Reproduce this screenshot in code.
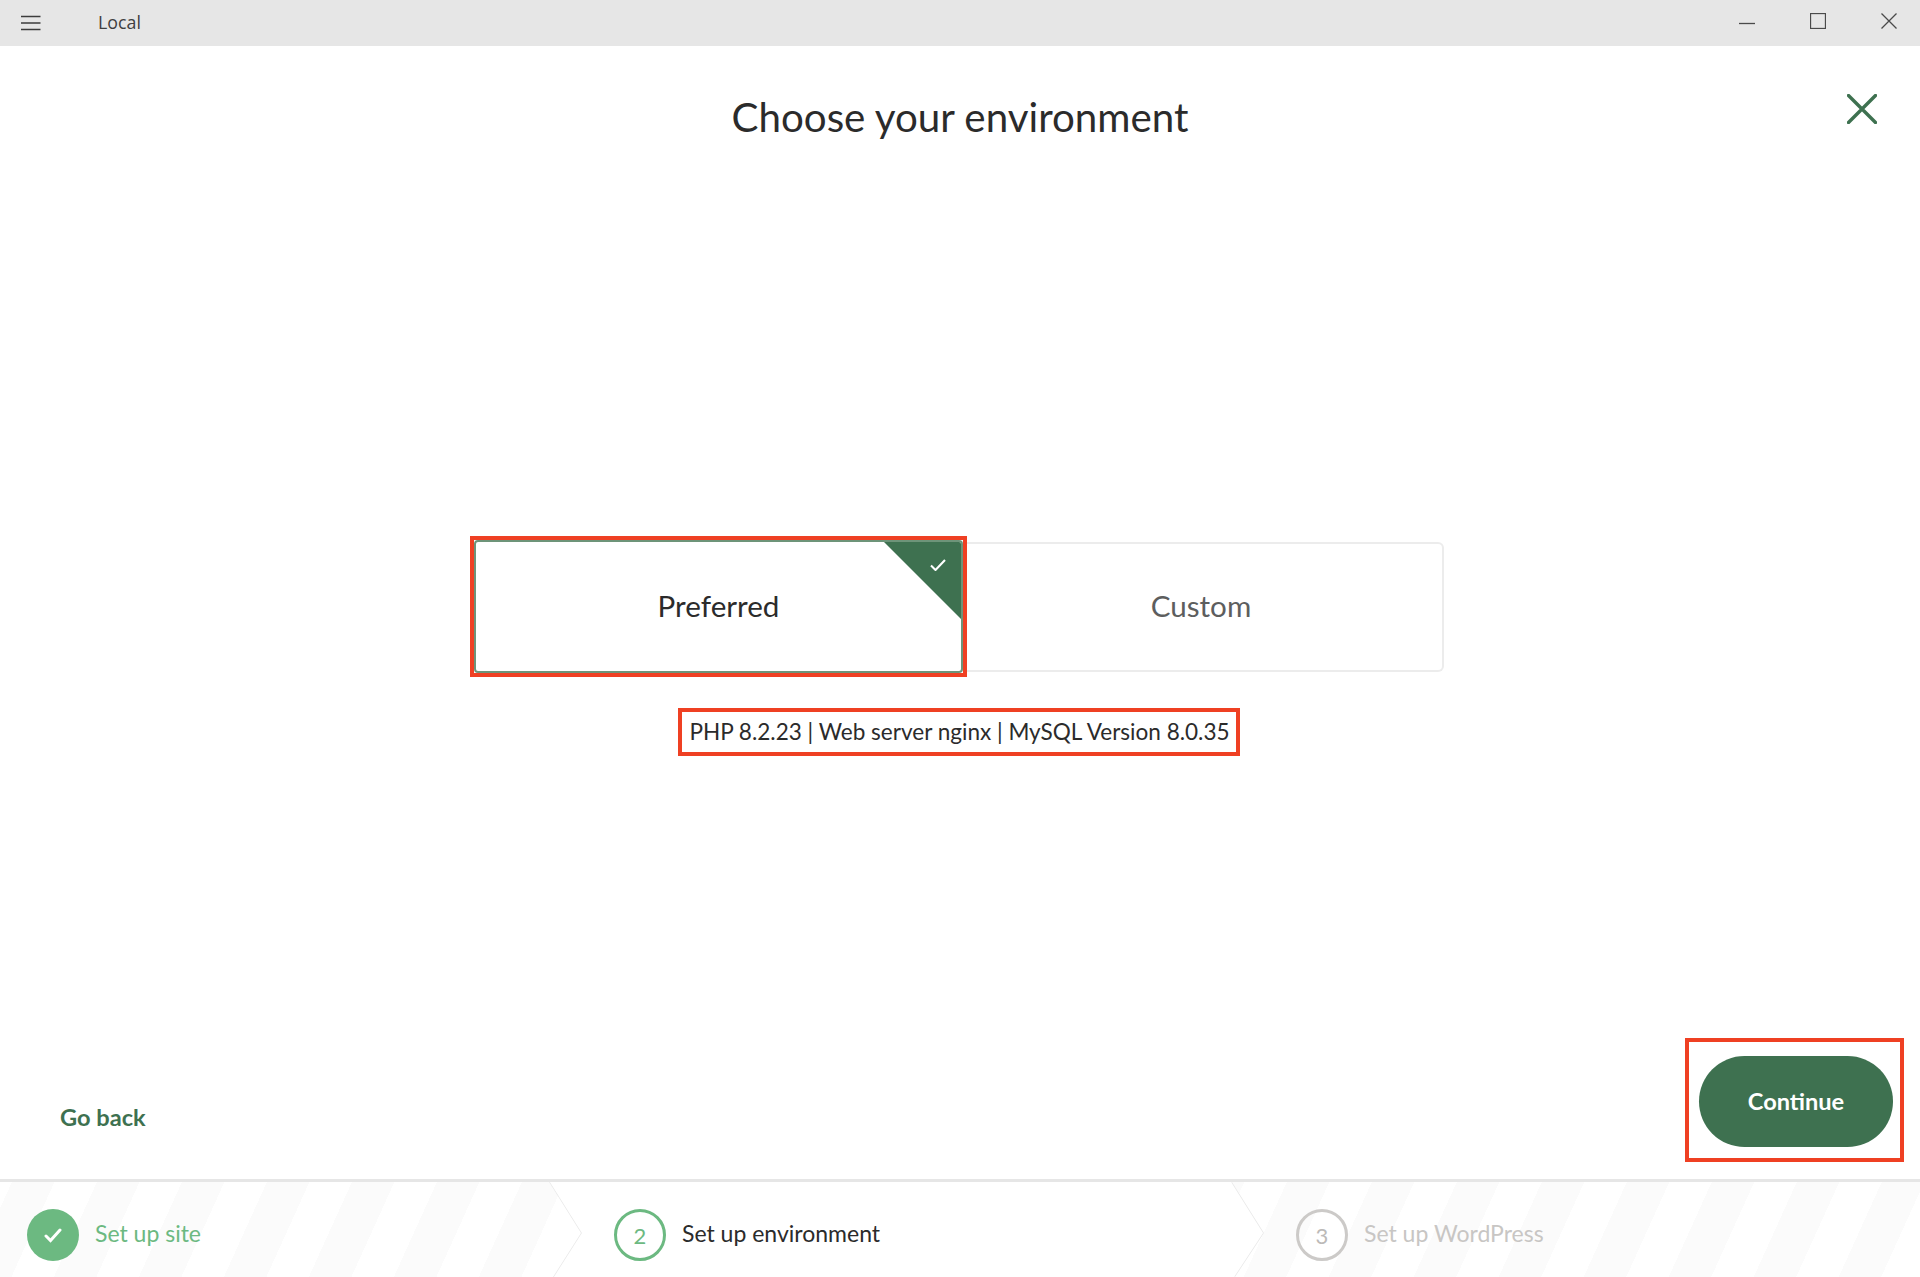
<script>
	// Local's new-site wizard, step 2: environment choice
</script>

<div class="window">
	<header class="titlebar">
		<svg class="menu" width="20" height="16" viewBox="0 0 20 16" aria-hidden="true">
			<path d="M0 1.5h19.5M0 8h19.5M0 14.5h19.5" />
		</svg>
		<span class="app-name">Local</span>
		<div class="controls">
			<svg width="16" height="16" viewBox="0 0 16 16" aria-hidden="true"><path d="M0 10.5h16" /></svg>
			<svg width="16" height="16" viewBox="0 0 16 16" aria-hidden="true"><rect x="0.5" y="0.5" width="15" height="15" /></svg>
			<svg width="16" height="16" viewBox="0 0 16 16" aria-hidden="true"><path d="M0.5 0.5l15 15M15.5 0.5l-15 15" /></svg>
		</div>
	</header>

	<main class="content">
		<svg class="dismiss" width="30" height="30" viewBox="0 0 30 30" aria-hidden="true">
			<path d="M1.5 1.5l27 27M28.5 1.5l-27 27" />
		</svg>
		<h1>Choose your environment</h1>

		<div class="options">
			<div class="marked">
				<button class="option selected">
					<span class="corner"></span>
					<svg class="tick" width="16" height="12" viewBox="0 0 16 12" aria-hidden="true">
						<path d="M1 6.5l4.5 4.5L15 1" />
					</svg>
					Preferred
				</button>
			</div>
			<button class="option other">Custom</button>
		</div>

		<p class="details">PHP 8.2.23 | Web server nginx | MySQL Version 8.0.35</p>

		<div class="actions">
			<button class="back">Go back</button>
			<div class="marked-action">
				<button class="continue">Continue</button>
			</div>
		</div>
	</main>

	<footer class="steps">
		<div class="step first">
			<span class="badge done">
				<svg width="18" height="15" viewBox="0 0 18 15" aria-hidden="true"><path d="M2 8l4.5 4.5L16 2" /></svg>
			</span>
			<span class="label done-label">Set up site</span>
		</div>
		<div class="step current">
			<svg class="chevrons" width="715" height="95" viewBox="0 0 715 95" aria-hidden="true">
				<path d="M0 0L32 51L4 95M683 0L715 51L686 95" />
			</svg>
			<span class="badge active">2</span>
			<span class="label active-label">Set up environment</span>
		</div>
		<div class="step last">
			<span class="badge todo">3</span>
			<span class="label todo-label">Set up WordPress</span>
		</div>
	</footer>
</div>

<style>
	:global(body) {
		margin: 0;
		background: #fff;
	}

	.window {
		display: flex;
		flex-direction: column;
		height: 1277px;
		font-family: Lato, "Open Sans", sans-serif;
		color: #2b2b2b;
		overflow: hidden;
	}

	button {
		font-family: inherit;
		cursor: pointer;
	}

	.titlebar {
		display: flex;
		align-items: center;
		flex: none;
		height: 46px;
		padding: 0 23px 0 21px;
		background: #e6e6e6;
	}
	.menu path {
		fill: none;
		stroke: #3c3c3c;
		stroke-width: 1.6;
	}
	.app-name {
		margin: -2px 0 0 57px;
		font-family: "Open Sans", sans-serif;
		font-size: 17.8px;
		color: #404040;
	}
	.controls {
		display: flex;
		gap: 55px;
		margin-left: auto;
	}
	.controls svg {
		display: block;
		margin-top: -5px;
	}
	.controls path,
	.controls rect {
		fill: none;
		stroke: #4a4a4a;
		stroke-width: 1.3;
	}

	.content {
		position: relative;
		display: flex;
		flex: 1;
		flex-direction: column;
		min-height: 0;
	}
	.dismiss {
		position: absolute;
		top: 48px;
		right: 43px;
	}
	.dismiss path {
		fill: none;
		stroke: #3e7150;
		stroke-width: 3.4;
		stroke-linecap: round;
	}

	h1 {
		margin: 46px 0 0;
		font-size: 40.3px;
		line-height: 50px;
		font-weight: 400;
		text-align: center;
	}

	.options {
		display: flex;
		align-items: center;
		margin: 394px 0 0 470px;
	}
	.marked {
		flex: none;
		width: 497px;
		height: 141px;
		box-sizing: border-box;
		border: 4px solid #ef4023;
	}
	.option {
		display: block;
		position: relative;
		box-sizing: border-box;
		padding: 0 0 3px;
		background: #fff;
		font-size: 29.6px;
	}
	.selected {
		width: 489px;
		height: 133px;
		border: 2px solid #6d9479;
		border-radius: 4px;
		color: #2b2b2b;
		overflow: hidden;
	}
	.corner {
		position: absolute;
		top: -2px;
		right: -2px;
		width: 81px;
		height: 81px;
		background: #3e7150;
		clip-path: polygon(0 0, 100% 0, 100% 100%);
	}
	.tick {
		position: absolute;
		top: 17px;
		right: 15px;
	}
	.tick path {
		fill: none;
		stroke: #fff;
		stroke-width: 2.1;
	}
	.other {
		width: 477px;
		height: 130px;
		padding-right: 7px;
		border: 2px solid #ececec;
		border-left: 0;
		border-radius: 0 6px 6px 0;
		color: #5d5e5e;
	}

	.details {
		align-self: center;
		box-sizing: border-box;
		width: 562px;
		height: 48px;
		margin: 31px 0 0 -2px;
		padding-left: 1px;
		border: 4px solid #ef4023;
		font-size: 22.55px;
		line-height: 40px;
		text-align: center;
		white-space: nowrap;
	}

	.actions {
		display: flex;
		align-items: flex-end;
		justify-content: space-between;
		margin-top: auto;
		padding: 0 16px 17px 60px;
	}
	.back {
		margin-bottom: 31px;
		padding: 0;
		border: 0;
		background: none;
		font-size: 23.6px;
		font-weight: 700;
		color: #3e7150;
	}
	.marked-action {
		box-sizing: border-box;
		width: 219px;
		height: 124px;
		padding: 14px 7px 0 10px;
		border: 4px solid #ef4023;
	}
	.continue {
		display: block;
		width: 194px;
		height: 91px;
		padding: 0 0 1px;
		border: 0;
		border-radius: 46px;
		background: #3e7150;
		color: #fff;
		font-size: 23.6px;
		font-weight: 700;
	}

	.steps {
		display: flex;
		flex: none;
		height: 95px;
		border-top: 3px solid #e6e6e6;
		background: repeating-linear-gradient(114.4deg, #fbfbfb 10.9px 49.6px, #fff 49.6px 88.3px);
	}
	.step {
		display: flex;
		align-items: center;
		box-sizing: border-box;
	}
	.first {
		flex: none;
		width: 549px;
		padding-left: 27px;
	}
	.current {
		position: relative;
		flex: none;
		width: 715px;
		padding-left: 65px;
		background: #fff;
		clip-path: polygon(0 0, 683px 0, 715px 51px, 686px 95px, 4px 95px, 32px 51px);
	}
	.last {
		flex: 1;
		padding-left: 32px;
	}
	.chevrons {
		position: absolute;
		top: 0;
		left: 0;
	}
	.chevrons path {
		fill: none;
		stroke: #e9e9e9;
		stroke-width: 1.5;
	}
	.badge {
		display: flex;
		align-items: center;
		justify-content: center;
		flex: none;
		box-sizing: border-box;
		width: 52px;
		height: 52px;
		margin-top: 11px;
		border-radius: 50%;
		font-size: 22px;
	}
	.done {
		background: #6cb981;
	}
	.done path {
		fill: none;
		stroke: #fff;
		stroke-width: 3;
		stroke-linecap: round;
	}
	.active {
		border: 3px solid #6cb981;
		color: #6cb981;
	}
	.todo {
		border: 3px solid #cccac8;
		color: #bcbab8;
	}
	.label {
		margin-left: 16px;
		margin-top: 7px;
		font-size: 23px;
	}
	.done-label {
		color: #6cb981;
	}
	.active-label {
		margin-left: 16px;
		color: #2b2b2b;
	}
	.todo-label {
		margin-left: 16px;
		color: #c8c6c4;
	}
</style>
